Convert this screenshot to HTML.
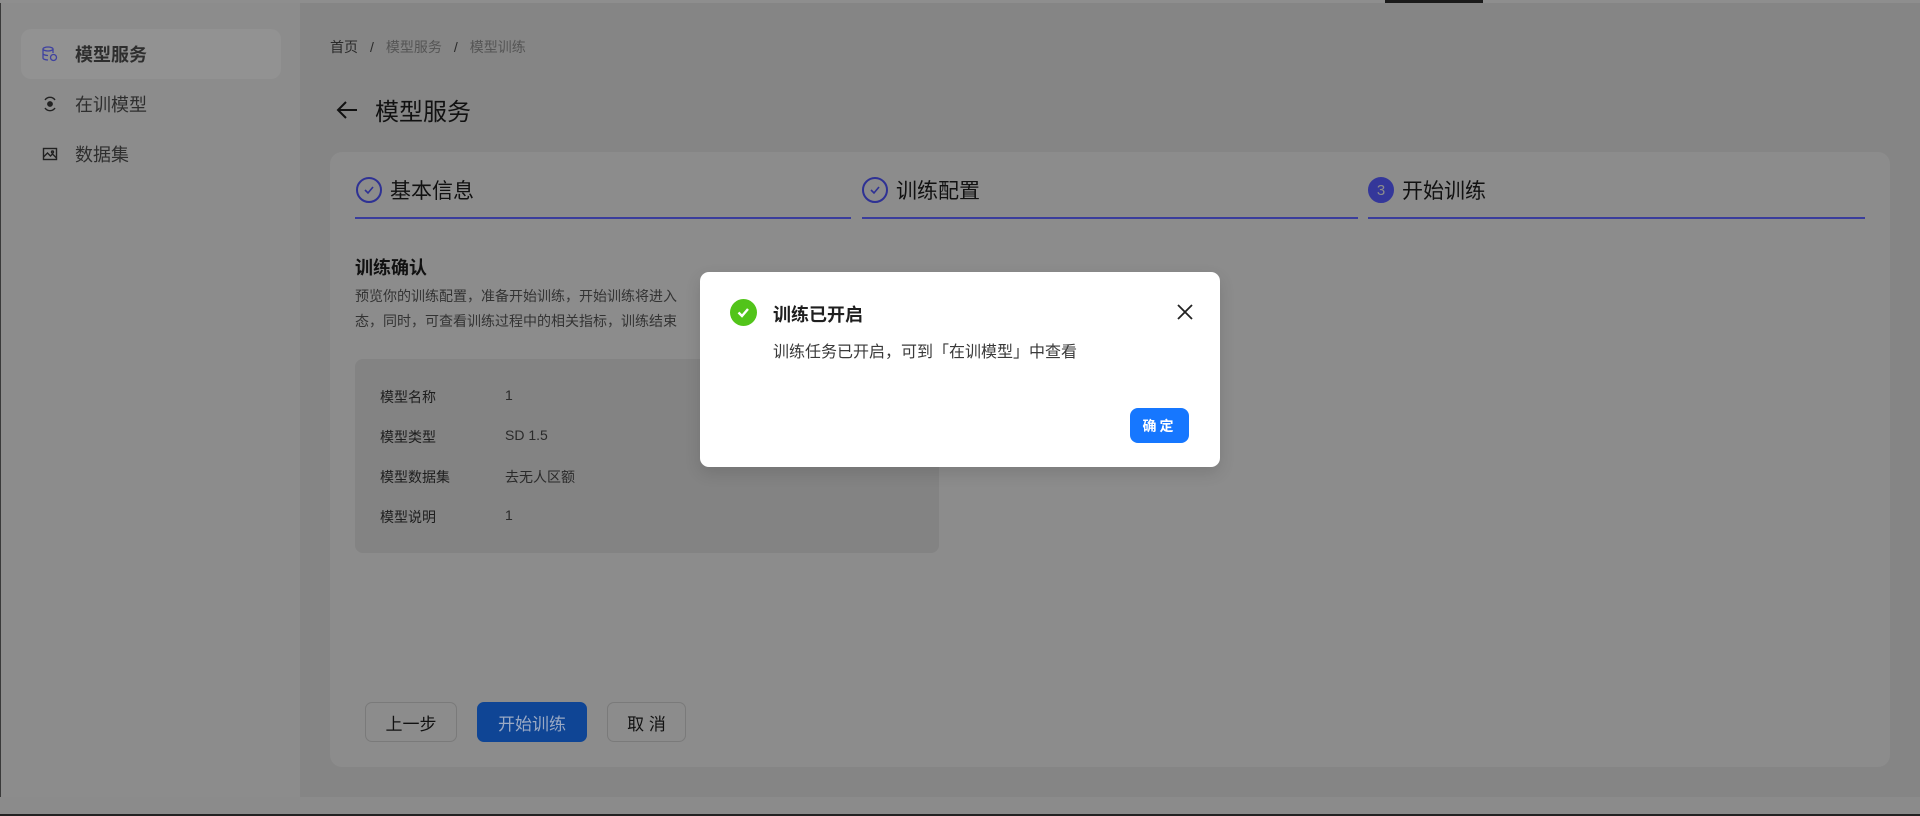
<!DOCTYPE html>
<html><head><meta charset="utf-8"><style>
*{margin:0;padding:0;box-sizing:border-box}
body{width:1920px;height:816px;overflow:hidden;background:#858585;font-family:"Liberation Sans","Noto Sans CJK SC",sans-serif;position:relative;color:#111}
.abs{position:absolute}
.side{left:0;top:3px;width:300px;height:811px;background:#8c8c8c;border-left:1px solid #3a3a3a}
.item{position:absolute;left:20px;width:260px;height:50px;display:flex;align-items:center;font-size:18px;color:#2e2e2e}
.item svg{position:absolute;left:21px}
.item span{position:absolute;left:54px}
.card{left:330px;top:152px;width:1560px;height:615px;background:#8c8c8c;border-radius:12px}
.step{position:absolute;top:176px;height:28px;display:flex;align-items:center;font-size:21px;color:#111}
.line{position:absolute;top:217px;height:2px;background:#3a3d9c}
.circ{width:26px;height:26px;border-radius:50%;border:2px solid #2e3194;display:flex;align-items:center;justify-content:center;margin-right:8px}
.lbl{position:absolute;left:380px;font-size:14px;color:#1e1e1e}
.val{position:absolute;left:505px;font-size:14px;color:#2a2a2a}
.btn{position:absolute;top:702px;height:40px;border:1px solid #7a7a7a;border-radius:7px;font-size:17px;display:flex;align-items:center;justify-content:center;color:#111}
.sep{margin:0 12px}
</style></head><body>
<div class="abs" style="left:0;top:0;width:1920px;height:3px;background:#8e8e8e"></div>
<div class="abs" style="left:1385px;top:0;width:98px;height:3px;background:#1a1a1a"></div>
<div class="abs side">
 <div class="item" style="top:26px;background:#929292;border-radius:10px;font-weight:bold">
  <svg width="16" height="16" viewBox="0 0 16 16" fill="none" stroke="#3f42a0" stroke-width="1.3"><ellipse cx="6" cy="3" rx="5" ry="2"/><path d="M1 3v9c0 1.1 2.2 2 5 2M1 7.5c0 1.1 2.2 2 5 2M11 3v4"/><circle cx="11.5" cy="11.5" r="3"/></svg>
  <span>模型服务</span></div>
 <div class="item" style="top:76px">
  <svg width="16" height="16" viewBox="0 0 16 16" fill="none" stroke="#222" stroke-width="1.4"><path d="M3 4a6 6 0 0 1 10 0M13 12a6 6 0 0 1-10 0M2 8h0M14 8h0"/><circle cx="8" cy="8" r="2.2" fill="#222"/></svg>
  <span>在训模型</span></div>
 <div class="item" style="top:126px">
  <svg width="16" height="16" viewBox="0 0 16 16" fill="none" stroke="#222" stroke-width="1.4"><rect x="1.5" y="2.5" width="13" height="11"/><path d="M1.5 11l4-4 3 3 2-2 4 4"/><circle cx="10.5" cy="6" r="1"/></svg>
  <span>数据集</span></div>
</div>
<div class="abs" style="left:0;top:797px;width:1920px;height:17px;background:#8b8b8b"></div>
<div class="abs" style="left:0;top:814px;width:1920px;height:2px;background:#222"></div>
<div class="abs" style="left:330px;top:37px;font-size:14px;color:#2a2a2a">首页<span class="sep">/</span><span style="color:#555">模型服务</span><span class="sep">/</span><span style="color:#555">模型训练</span></div>
<div class="abs" style="left:336px;top:92px;font-size:24px;color:#111;display:flex;align-items:center">
 <svg width="22" height="20" viewBox="0 0 22 20" fill="none" stroke="#111" stroke-width="2"><path d="M21 10H2M10 2L2 10l8 8"/></svg>
 <span style="margin-left:17px">模型服务</span></div>
<div class="abs card"></div>
<div class="step" style="left:356px"><div class="circ"><svg width="14" height="14" viewBox="0 0 14 14" fill="none" stroke="#2e3194" stroke-width="1.6"><path d="M3 7l3 3 5-6"/></svg></div>基本信息</div>
<div class="step" style="left:862px"><div class="circ"><svg width="14" height="14" viewBox="0 0 14 14" fill="none" stroke="#2e3194" stroke-width="1.6"><path d="M3 7l3 3 5-6"/></svg></div>训练配置</div>
<div class="step" style="left:1368px"><div class="circ" style="background:#34379a;border-color:#34379a;color:#8c8c8c;font-size:15px">3</div>开始训练</div>
<div class="line" style="left:355px;width:496px"></div>
<div class="line" style="left:862px;width:496px"></div>
<div class="line" style="left:1368px;width:497px"></div>
<div class="abs" style="left:355px;top:254px;font-size:18px;font-weight:bold">训练确认</div>
<div class="abs" style="left:355px;top:284px;font-size:14px;color:#333;line-height:25px;width:600px">预览你的训练配置，准备开始训练，开始训练将进入<br>态，同时，可查看训练过程中的相关指标，训练结束</div>
<div class="abs" style="left:355px;top:359px;width:584px;height:194px;background:#838383;border-radius:8px"></div>
<div class="lbl" style="top:387px">模型名称</div><div class="val" style="top:387px">1</div>
<div class="lbl" style="top:427px">模型类型</div><div class="val" style="top:427px">SD 1.5</div>
<div class="lbl" style="top:467px">模型数据集</div><div class="val" style="top:467px">去无人区额</div>
<div class="lbl" style="top:507px">模型说明</div><div class="val" style="top:507px">1</div>
<div class="btn" style="left:365px;width:92px">上一步</div>
<div class="btn" style="left:477px;width:110px;background:#0f4595;border-color:#0f4595;color:#9aa9c4">开始训练</div>
<div class="btn" style="left:607px;width:79px">取 消</div>
<div class="abs" style="left:700px;top:272px;width:520px;height:195px;background:#fff;border-radius:9px;box-shadow:0 6px 16px rgba(0,0,0,.12)">
 <div class="abs" style="left:30px;top:27px;width:27px;height:27px;border-radius:50%;background:#52c41a"><svg width="27" height="27" viewBox="0 0 27 27" fill="none" stroke="#fff" stroke-width="2.4"><path d="M8.5 13.5l3.5 3.5 6-7"/></svg></div>
 <div class="abs" style="left:73px;top:29px;font-size:18px;font-weight:bold;color:#1f1f1f">训练已开启</div>
 <div class="abs" style="left:73px;top:66px;font-size:16px;color:#3a3a3a">训练任务已开启，可到「在训模型」中查看</div>
 <svg class="abs" style="left:477px;top:32px" width="16" height="16" viewBox="0 0 16 16" stroke="#222" stroke-width="1.8"><path d="M1 1l14 14M15 1L1 15"/></svg>
 <div class="abs" style="left:430px;top:136px;width:59px;height:35px;background:#1677ff;border-radius:8px;color:#fff;font-size:14px;font-weight:bold;display:flex;align-items:center;justify-content:center;letter-spacing:3px">确定</div>
</div>
</body></html>
